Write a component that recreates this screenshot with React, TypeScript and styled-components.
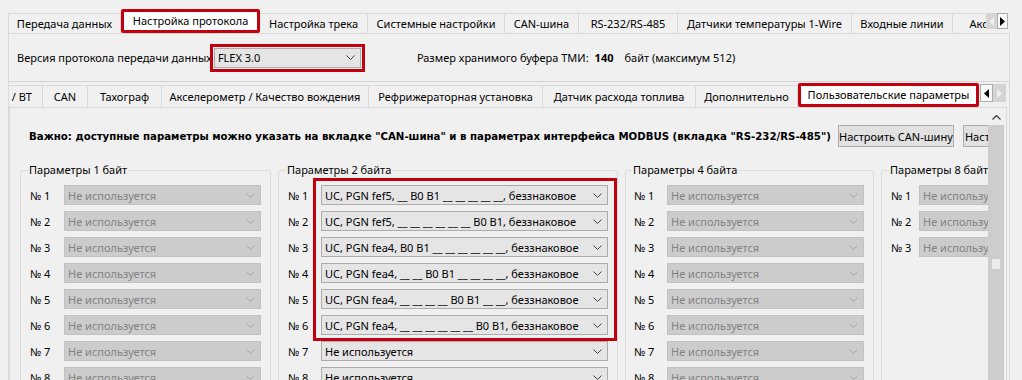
import React from "react";
import styled, { createGlobalStyle, css } from "styled-components";

const RED = "#c20010";

const GlobalStyle = createGlobalStyle`
  html, body {
    margin: 0;
    padding: 0;
    background: #f0f0f0;
  }
  body {
    font-family: "Noto Sans", "Liberation Sans", Arial, sans-serif;
    font-size: 11px;
    color: #000;
  }
  * {
    box-sizing: border-box;
  }
`;

const Window = styled.div`
  width: 1022px;
  height: 380px;
  overflow: hidden;
  padding-top: 9px;
  background: #f0f0f0;
`;

const TabStrip = styled.div<{ $left: number; $top?: number }>`
  display: flex;
  align-items: flex-end;
  height: 24px;
  margin-left: ${(p) => p.$left}px;
  margin-top: ${(p) => p.$top || 0}px;
  position: relative;
  z-index: 1;
`;

const TabList = styled.div<{ $width: number }>`
  display: flex;
  align-items: flex-end;
  width: ${(p) => p.$width}px;
  height: 100%;
  overflow: hidden;
  flex-shrink: 0;
`;

const Tab = styled.div<{ $w: number; $h: number; $active?: boolean; $first?: boolean; $clip?: boolean }>`
  flex: 0 0 ${(p) => p.$w}px;
  height: ${(p) => p.$h}px;
  display: flex;
  align-items: center;
  justify-content: ${(p) => (p.$clip ? "flex-end" : "center")};
  padding-right: ${(p) => (p.$clip ? 10 : 0)}px;
  overflow: hidden;
  white-space: nowrap;
  background: #f0f0f0;
  border-top: 1px solid #d9d9d9;
  border-right: 1px solid #d9d9d9;
  border-left: ${(p) => (p.$first ? "1px solid #d9d9d9" : "none")};

  ${(p) =>
    p.$active &&
    css`
      height: 24px;
      align-self: flex-start;
      background: #fff;
      border: 3px solid ${RED};
      border-radius: 2px;
      padding-bottom: 2px;
    `}
`;

const Arrows = styled.div<{ $top: number }>`
  display: flex;
  align-self: flex-start;
  margin-top: ${(p) => p.$top}px;
`;

const ArrowBtn = styled.div<{ $w: number; $h: number; $off?: boolean }>`
  width: ${(p) => p.$w}px;
  height: ${(p) => p.$h}px;
  display: flex;
  align-items: center;
  justify-content: center;
  background: ${(p) => (p.$off ? "#d4d4d4" : "#f7f7f7")};
  border: 1px solid ${(p) => (p.$off ? "#d4d4d4" : "#adadad")};
`;

const Pane = styled.div`
  margin-left: 8px;
  width: 1002px;
  height: 360px;
  border: 1px solid #d9d9d9;
  background: #f0f0f0;
`;

const ProtoRow = styled.div`
  display: flex;
  align-items: center;
  height: 47px;
  padding-left: 8px;
  white-space: nowrap;
`;

const HiCombo = styled.div`
  margin-left: 2px;
  outline: 3px solid ${RED};
  outline-offset: 1px;
`;

const BufferText = styled.div`
  margin-left: 56px;
  display: flex;
  align-items: center;
`;

const Strong = styled.b`
  font-weight: 700;
  margin: 0 11px 0 6px;
`;

const InnerTabs = styled.div`
  border-top: 1px solid #d5d5d5;
`;

const SubPane = styled.div`
  width: 998px;
  height: 290px;
  border: 1px solid #d9d9d9;
  display: flex;
  background: #f0f0f0;
`;

const ScrollContent = styled.div`
  flex: 1;
  overflow: hidden;
  padding: 17px 0 0 10px;
`;

const NoticeRow = styled.div`
  display: flex;
  align-items: center;
  height: 22px;
  margin-left: 9px;
  white-space: nowrap;
`;

const Notice = styled.div`
  font-family: "DejaVu Sans", Verdana, sans-serif;
  font-weight: 700;
  font-size: 10.2px;
  width: 809px;
  flex-shrink: 0;
`;

const Button = styled.div`
  flex: 0 0 111px;
  height: 22px;
  margin-right: 9px;
  display: flex;
  align-items: center;
  justify-content: center;
  background: #e1e1e1;
  border: 1px solid #adadad;
`;

const Groups = styled.div`
  display: flex;
  gap: 7px;
  margin-top: 15px;
`;

const Group = styled.fieldset<{ $w: number; $pl?: number }>`
  flex: 0 0 ${(p) => p.$w}px;
  min-width: 0;
  height: 240px;
  margin: 0;
  padding: 7px 0 0 ${(p) => p.$pl ?? 9}px;
  border: 1px solid #dcdcdc;
  border-radius: 2px;
`;

const Legend = styled.legend`
  padding: 0 1px;
  margin-left: -2px;
  line-height: 16px;
`;

const Rows = styled.div`
  position: relative;
  display: flex;
  flex-direction: column;
  gap: 6px;
`;

const Row = styled.div`
  display: flex;
  align-items: center;
  height: 20px;
`;

const NumLabel = styled.span<{ $w: number }>`
  flex: 0 0 ${(p) => p.$w}px;
`;

const Combo = styled.div<{ $w: number; $off?: boolean }>`
  flex: 0 0 ${(p) => p.$w}px;
  width: ${(p) => p.$w}px;
  height: 20px;
  display: flex;
  align-items: center;
  justify-content: space-between;
  padding: 0 5px 0 3px;
  white-space: nowrap;
  overflow: hidden;
  background: ${(p) => (p.$off ? "#cccccc" : "#e5e5e5")};
  border: 1px solid ${(p) => (p.$off ? "#c2c2c2" : "#acacac")};
  color: ${(p) => (p.$off ? "#838383" : "#000")};
`;

const Highlight = styled.div`
  position: absolute;
  left: 25px;
  top: -7px;
  width: 304px;
  height: 163px;
  border: 3px solid ${RED};
  pointer-events: none;
`;

const ScrollBar = styled.div`
  flex: 0 0 16px;
  margin: 2px 2px 0 0;
  display: flex;
  flex-direction: column;
`;

const ScrollUp = styled.div`
  height: 15px;
  display: flex;
  align-items: center;
  justify-content: center;
  background: #f0f0f0;
`;

const ScrollTrack = styled.div`
  flex: 1;
  background: #cdcdcd;
  padding-top: 134px;
  display: flex;
  justify-content: center;
  align-items: flex-start;
`;

const Grip = styled.div`
  width: 8px;
  height: 10px;
  background: #ececec;
`;

const Chevron = ({ color = "#404040" }: { color?: string }) => (
  <svg width="9" height="5" viewBox="0 0 9 5">
    <polyline points="0.5,0.5 4.5,4.5 8.5,0.5" fill="none" stroke={color} strokeWidth="1" />
  </svg>
);

const Triangle = ({ dir, color }: { dir: "left" | "right"; color: string }) => (
  <svg width="5" height="9" viewBox="0 0 5 9">
    <polygon points={dir === "left" ? "5,0 0,4.5 5,9" : "0,0 5,4.5 0,9"} fill={color} />
  </svg>
);

const topTabs = [
  { label: "Передача данных", w: 113 },
  { label: "Настройка протокола", w: 139, active: true },
  { label: "Настройка трека", w: 108 },
  { label: "Системные настройки", w: 137 },
  { label: "CAN-шина", w: 74 },
  { label: "RS-232/RS-485", w: 99 },
  { label: "Датчики температуры 1-Wire", w: 174 },
  { label: "Входные линии", w: 101 },
  { label: "Акселерометр", w: 110 },
];

const subTabs = [
  { label: "Связь / BT", w: 34, clip: true },
  { label: "CAN", w: 45 },
  { label: "Тахограф", w: 74 },
  { label: "Акселерометр / Качество вождения", w: 207 },
  { label: "Рефрижераторная установка", w: 174 },
  { label: "Датчик расхода топлива", w: 153 },
  { label: "Дополнительно", w: 102 },
  { label: "Пользовательские параметры", w: 181, active: true },
];

const twoByte = [
  "UC, PGN fef5, __ B0 B1 __ __ __ __ __, беззнаковое",
  "UC, PGN fef5, __ __ __ __ __ __ B0 B1, беззнаковое",
  "UC, PGN fea4, B0 B1 __ __ __ __ __ __, беззнаковое",
  "UC, PGN fea4, __ __ B0 B1 __ __ __ __, беззнаковое",
  "UC, PGN fea4, __ __ __ __ B0 B1 __ __, беззнаковое",
  "UC, PGN fea4, __ __ __ __ __ __ B0 B1, беззнаковое",
  "Не используется",
  "Не используется",
];

const UNUSED = "Не используется";

interface GroupProps {
  title: string;
  width: number;
  labelWidth: number;
  comboWidth: number;
  values: string[];
  disabled?: boolean;
  pl?: number;
  highlight?: boolean;
}

const ParamGroup = (props: GroupProps) => (
  <Group $w={props.width} $pl={props.pl}>
    <Legend>{props.title}</Legend>
    <Rows>
      {props.values.map((v, i) => (
        <Row key={i}>
          <NumLabel $w={props.labelWidth}>№ {i + 1}</NumLabel>
          <Combo $w={props.comboWidth} $off={props.disabled}>
            <span>{v}</span>
            <Chevron color={props.disabled ? "#a8a8a8" : "#404040"} />
          </Combo>
        </Row>
      ))}
      {props.highlight && <Highlight />}
    </Rows>
  </Group>
);

export default function App() {
  const unused8 = Array(8).fill(UNUSED);
  return (
    <Window>
      <GlobalStyle />
      <TabStrip $left={8}>
        <TabList $width={978}>
          {topTabs.map((t, i) => (
            <Tab key={t.label} $w={t.w} $h={20} $active={t.active} $first={i === 0}>
              {t.label}
            </Tab>
          ))}
        </TabList>
        <Arrows $top={4}>
          <ArrowBtn $w={11} $h={16} $off>
            <Triangle dir="left" color="#efefef" />
          </ArrowBtn>
          <ArrowBtn $w={11} $h={16}>
            <Triangle dir="right" color="#000" />
          </ArrowBtn>
        </Arrows>
      </TabStrip>

      <Pane>
        <ProtoRow>
          <span>Версия протокола передачи данных</span>
          <HiCombo>
            <Combo $w={147}>
              <span>FLEX 3.0</span>
              <Chevron />
            </Combo>
          </HiCombo>
          <BufferText>
            <span>Размер хранимого буфера ТМИ:</span>
            <Strong>140</Strong>
            <span>байт (максимум 512)</span>
          </BufferText>
        </ProtoRow>

        <InnerTabs>
          <TabStrip $left={0} $top={1}>
            <TabList $width={971}>
              {subTabs.map((t) => (
                <Tab key={t.label} $w={t.w} $h={22} $active={t.active} $clip={t.clip}>
                  {t.label}
                </Tab>
              ))}
            </TabList>
            <Arrows $top={1}>
              <ArrowBtn $w={13} $h={18}>
                <Triangle dir="left" color="#000" />
              </ArrowBtn>
              <ArrowBtn $w={13} $h={18} $off>
                <Triangle dir="right" color="#efefef" />
              </ArrowBtn>
            </Arrows>
          </TabStrip>

          <SubPane>
            <ScrollContent>
              <NoticeRow>
                <Notice>
                  Важно: доступные параметры можно указать на вкладке "CAN-шина" и в параметрах интерфейса MODBUS (вкладка "RS-232/RS-485")
                </Notice>
                <Button>Настроить CAN-шину</Button>
                <Button>Настроить MODBUS</Button>
              </NoticeRow>
              <Groups>
                <ParamGroup title="Параметры 1 байт" width={251} labelWidth={34} comboWidth={197} values={unused8} disabled />
                <ParamGroup title="Параметры 2 байта" width={340} labelWidth={33} comboWidth={287} values={twoByte} highlight />
                <ParamGroup title="Параметры 4 байта" width={249} labelWidth={33} comboWidth={197} values={unused8} disabled pl={8} />
                <ParamGroup title="Параметры 8 байт" width={250} labelWidth={28} comboWidth={150} values={Array(3).fill(UNUSED)} disabled />
              </Groups>
            </ScrollContent>
            <ScrollBar>
              <ScrollUp>
                <svg width="9" height="5" viewBox="0 0 9 5">
                  <polyline points="0.5,4.5 4.5,0.5 8.5,4.5" fill="none" stroke="#404040" strokeWidth="1.3" />
                </svg>
              </ScrollUp>
              <ScrollTrack>
                <Grip />
              </ScrollTrack>
            </ScrollBar>
          </SubPane>
        </InnerTabs>
      </Pane>
    </Window>
  );
}
